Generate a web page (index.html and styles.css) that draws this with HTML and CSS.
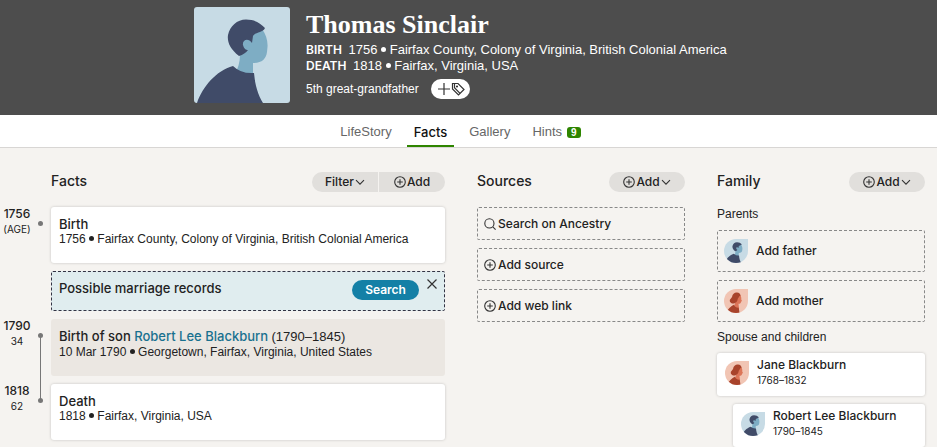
FILE: index.html
```html
<!DOCTYPE html>
<html lang="en">
<head>
<meta charset="utf-8">
<meta name="viewport" content="width=device-width, initial-scale=1">
<title>Thomas Sinclair – Facts</title>
<link rel="stylesheet" href="styles.css">
</head>
<body>
<svg class="sprite" aria-hidden="true">
  <symbol id="plus-circle" viewBox="0 0 12 12"><circle cx="6" cy="6" r="5.3"/><path d="M6 3.2v5.6M3.2 6h5.6"/></symbol>
  <symbol id="chevron" viewBox="0 0 10 12"><path d="M1 4.2l4 4 4-4"/></symbol>
  <symbol id="search" viewBox="0 0 12 12"><circle cx="5.4" cy="5.4" r="4.6"/><path d="M8.8 8.8l2.8 2.8"/></symbol>
  <symbol id="man" viewBox="0 0 96 96">
    <path fill="#c7dbe5" d="M0 0h96v96H0z"/>
    <path fill="#7eadc4" d="M40 69C44 62 46 55 46 48L50 30 68 22C72 27 74 34 73.500 40L73 45C72 52 68 56 59 56L59 68Q49 74 40 69z"/>
    <path fill="#404b68" d="M45 49C36 42 33 35 34 28C36 19 43 12.500 52 12.500C61 12.500 66 16 71 21C69 26 61 25 59 29L58 36C54 30 48 33 49 38C50 42 52 43 54 43Q51 47 45 49zM3 96C9 79 22 64 39 59Q47 67 60 66C61 78 64 88 69 96z"/>
  </symbol>
  <symbol id="woman" viewBox="0 0 96 96">
    <path fill="#f1c5b4" d="M0 0h96v96H0z"/>
    <path fill="#dc7558" d="M42 68L47 42 61 20C69 27 70 35 69 42L72 48 68 51C68 57 65 59 58 59L60 77 45 84z"/>
    <path fill="#a8432b" d="M45 55C38 62 24 57 23 48C22 41 29 38 32 32C34 19 43 13 52 14C61 15 66 20 66 27C60 27 60 34 55 39C54 48 51 52 45 55zM9 96C14 80 27 69 41 62C42 72 51 76 59 75L62 96z"/>
  </symbol>
</svg>

<header class="hero">
  <svg class="portrait" role="img" aria-label="Portrait"><use href="#man"/></svg>
  <div class="identity">
    <h1>Thomas Sinclair</h1>
    <p class="vital"><b>BIRTH</b> 1756 <i class="dot"></i> Fairfax County, Colony of Virginia, British Colonial America</p>
    <p class="vital"><b>DEATH</b> 1818 <i class="dot"></i> Fairfax, Virginia, USA</p>
    <div class="relation">
      <span>5th great-grandfather</span>
      <button class="tag-button" type="button" aria-label="Add tag">
        <svg viewBox="0 0 28 14"><path d="M7 1v12M1 7h12"/><path d="M15.500 1.500h5.500l6 6-5.500 5.500-6-6z"/><path d="M17.500 1.500v4.200l5.500 5.600"/><circle cx="20" cy="4.500" r=".5"/></svg>
      </button>
    </div>
  </div>
</header>

<nav class="tabs">
  <a href="#lifestory">LifeStory</a>
  <a href="#facts" class="active" aria-current="page">Facts</a>
  <a href="#gallery">Gallery</a>
  <a href="#hints">Hints <span class="badge">9</span></a>
</nav>

<main class="columns">
  <section class="facts" id="facts">
    <div class="section-head">
      <h2>Facts</h2>
      <div class="button-group">
        <button class="pill" type="button">Filter<svg class="icon narrow"><use href="#chevron"/></svg></button>
        <button class="pill" type="button"><svg class="icon"><use href="#plus-circle"/></svg><span>Add</span></button>
      </div>
    </div>
    <div class="timeline">
      <div class="event">
        <div class="age"><b>1756</b><span>(AGE)</span></div>
        <div class="marker"></div>
        <article class="card fact"><h3>Birth</h3><p>1756 <i class="dot"></i> Fairfax County, Colony of Virginia, British Colonial America</p></article>
      </div>
      <div class="event">
        <div class="hint">
          <h3>Possible marriage records</h3>
          <button class="search" type="button">Search</button>
          <button class="close" type="button" aria-label="Dismiss"><svg viewBox="0 0 10 10"><path d="M0.500 0.500l9 9M9.500 0.500l-9 9"/></svg></button>
        </div>
      </div>
      <div class="event linked">
        <div class="age"><b>1790</b><span>34</span></div>
        <div class="marker"></div>
        <article class="fact family-fact"><h3>Birth of son <a href="#robert">Robert Lee Blackburn</a> <span>(1790–1845)</span></h3><p>10 Mar 1790 <i class="dot"></i> Georgetown, Fairfax, Virginia, United States</p></article>
      </div>
      <div class="event">
        <div class="age"><b>1818</b><span>62</span></div>
        <div class="marker"></div>
        <article class="card fact"><h3>Death</h3><p>1818 <i class="dot"></i> Fairfax, Virginia, USA</p></article>
      </div>
    </div>
  </section>

  <section>
    <div class="section-head">
      <h2>Sources</h2>
      <button class="pill wide" type="button"><svg class="icon"><use href="#plus-circle"/></svg><span>Add</span><svg class="icon narrow"><use href="#chevron"/></svg></button>
    </div>
    <div class="stack">
      <button class="dashed source" type="button"><svg class="icon"><use href="#search"/></svg>Search on Ancestry</button>
      <button class="dashed source" type="button"><svg class="icon"><use href="#plus-circle"/></svg>Add source</button>
      <button class="dashed source" type="button"><svg class="icon"><use href="#plus-circle"/></svg>Add web link</button>
    </div>
  </section>

  <section>
    <div class="section-head">
      <h2>Family</h2>
      <button class="pill wide" type="button"><svg class="icon"><use href="#plus-circle"/></svg><span>Add</span><svg class="icon narrow"><use href="#chevron"/></svg></button>
    </div>
    <h4>Parents</h4>
    <div class="stack">
      <button class="dashed relative" type="button"><svg class="avatar"><use href="#man"/></svg>Add father</button>
      <button class="dashed relative" type="button"><svg class="avatar"><use href="#woman"/></svg>Add mother</button>
    </div>
    <h4>Spouse and children</h4>
    <div class="stack">
      <a class="card person" href="#jane"><svg class="avatar"><use href="#woman"/></svg><span><b>Jane Blackburn</b><small>1768–1832</small></span></a>
      <a class="card person child" href="#robert" id="robert"><svg class="avatar"><use href="#man"/></svg><span><b>Robert Lee Blackburn</b><small>1790–1845</small></span></a>
    </div>
  </section>
</main>
</body>
</html>
```
FILE: styles.css
```css
* { box-sizing: border-box; }

body {
  margin: 0;
  overflow-x: hidden;
  background: #f5f3f0;
  color: #222;
  font: 12px/16px "Liberation Sans", sans-serif;
}

h1, h2, h3, h4, p { margin: 0; }
b, h2, h3, button, small, .age, .active { font-family: Inter, "Liberation Sans", sans-serif; }
b, h2, h3 { font-weight: 500; }
a { color: inherit; text-decoration: none; }
svg { display: block; flex: none; }
button { margin: 0; padding: 0; border: 0; color: inherit; font-size: 12px; line-height: 16px; font-weight: 500; cursor: pointer; }
.sprite { position: absolute; width: 0; height: 0; }

.icon { width: 12px; height: 12px; fill: none; stroke: #333; stroke-width: 1.1; }
.icon.narrow { width: 10px; }
.dot {
  display: inline-block;
  width: 5px;
  height: 5px;
  border-radius: 50%;
  background: currentColor;
  vertical-align: 2px;
}

.hero {
  display: flex;
  gap: 16px;
  min-height: 115px;
  padding: 7px 16px 12px 194px;
  background: #4d4d4d;
  color: #fff;
}
.portrait { width: 96px; height: 96px; border-radius: 3px; }
h1 { font: bold 26px/35px "Liberation Serif", serif; }
.vital { font-size: 13px; }
.vital b { margin-right: 3px; font-size: 12px; font-weight: 600; }
.relation { display: flex; align-items: center; gap: 12px; margin-top: 5px; }
.tag-button { padding: 3px 5px 3px 6px; border-radius: 10px; background: #fff; }
.tag-button svg { width: 28px; height: 14px; fill: none; stroke: #333; stroke-width: 1.2; }

.tabs {
  display: flex;
  justify-content: center;
  gap: 8px;
  height: 33px;
  padding-right: 16px;
  border-bottom: 1px solid #d8d6d4;
  background: #fff;
  color: #666;
  font-size: 13px;
}
.tabs a { display: flex; align-items: center; gap: 5px; padding: 4px 7px 0; border-bottom: 2px solid transparent; }
.tabs .active { border-color: #2e8500; color: #111; font-weight: 500; }
.badge { padding: 0 4px; border-radius: 3px; background: #2e8500; color: #fff; font-size: 10px; line-height: 11px; font-weight: 700; }

.columns {
  display: grid;
  grid-template-columns: 445fr 208fr 208fr;
  gap: 32px;
  padding: 24px 12px 0 0;
}
.section-head { display: flex; align-items: center; justify-content: space-between; height: 20px; margin-bottom: 15px; }
.facts .section-head { padding-left: 51px; }
h2 { font-size: 14px; line-height: 20px; padding-bottom: 2px; }

.pill {
  display: flex;
  align-items: center;
  justify-content: center;
  gap: 1px;
  height: 20px;
  padding: 0 13px;
  border-radius: 10px;
  background: #e1dfdc;
}
.pill.wide { min-width: 76px; }
.button-group { display: flex; gap: 1px; }
.button-group .pill { min-width: 66px; }
.button-group .pill:first-child { border-radius: 10px 0 0 10px; }
.button-group .pill:last-child { border-radius: 0 10px 10px 0; }

.card { border-radius: 3px; background: #fff; box-shadow: 0 0 3px rgba(0, 0, 0, .2); }

.timeline { display: flex; flex-direction: column; gap: 8px; }
.event { display: grid; grid-template-columns: 34px 17px 1fr; }
.age { display: flex; flex-direction: column; align-items: center; }
.age b { line-height: 14px; }
.age span { font-size: 10px; line-height: 17px; }
.marker { position: relative; padding: 14px 0 0 4px; }
.marker::before { content: ""; display: block; width: 5px; height: 5px; border-radius: 50%; background: #777; }
.linked .marker::after { content: ""; position: absolute; top: 16px; left: 6px; width: 1px; height: 100%; padding-bottom: 8px; box-sizing: content-box; background: #777; }
h3 { font-size: 13px; line-height: 16px; }
.fact { min-height: 56px; padding: 9px 8px 16px; }
.fact p { line-height: 15px; }
.family-fact { border-radius: 3px; background: #ebe7e2; }
.family-fact a { color: #19718f; }
.family-fact span { font-family: "Liberation Sans", sans-serif; font-weight: 400; }

.hint {
  display: flex;
  grid-column: 3;
  align-items: flex-start;
  height: 40px;
  padding: 8px 7px 0;
  border: 1px dashed #334;
  border-radius: 2px;
  background: #e0edef;
}
.hint h3 { flex: 1; }
.search { width: 67px; height: 20px; border-radius: 10px; background: #1480a6; color: #fff; font-weight: 600; }
.close { margin: -1px 0 0 8px; background: none; }
.close svg { width: 10px; height: 10px; stroke: #333; stroke-width: 1.2; }

.stack { display: flex; flex-direction: column; gap: 8px; }
.dashed { display: flex; align-items: center; border: 1px dashed #888; border-radius: 2px; background: none; text-align: left; }
.source { gap: 2px; height: 33px; padding: 0 6px; }
.relative { gap: 8px; height: 42px; padding: 0 6px; }
.avatar { width: 24px; height: 24px; border-radius: 50% 0 50% 50%; }
h4 { margin-bottom: 8px; font-size: 12px; line-height: 15px; font-weight: 400; }
.stack + h4 { margin-top: 8px; }
.person { display: flex; align-items: flex-start; gap: 8px; min-height: 43px; padding: 4px 8px; }
.person .avatar { margin-top: 4px; }
.person b, .person small { display: block; }
.person small { font-size: 10px; line-height: 15px; }
.child { margin-left: 16px; }
```
